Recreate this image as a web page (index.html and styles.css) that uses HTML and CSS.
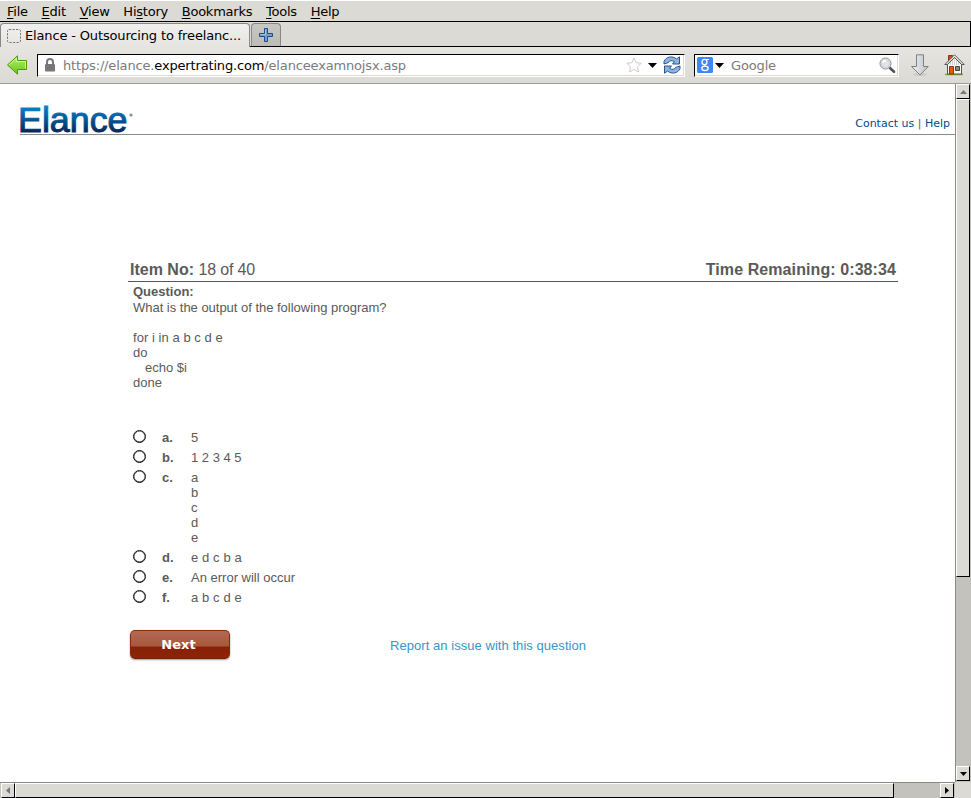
FILE: index.html
```
<!DOCTYPE html>
<html lang="en">
<head>
<meta charset="utf-8">
<title>Elance - Outsourcing to freelancers</title>
<link rel="stylesheet" href="styles.css">
</head>
<body>
<div class="window">
  <nav class="menubar">
    <span><u>F</u>ile</span><span><u>E</u>dit</span><span><u>V</u>iew</span><span>Hi<u>s</u>tory</span><span><u>B</u>ookmarks</span><span><u>T</u>ools</span><span><u>H</u>elp</span>
  </nav>
  <div class="tabs">
    <div class="tab"><svg width="14" height="14" viewBox="0 0 14 14"><rect x=".5" y=".5" width="13" height="13" rx="1.5" fill="none" stroke="#777" stroke-dasharray="2.2 1.3"/></svg><span>Elance - Outsourcing to freelanc...</span></div>
    <div class="newtab"><svg width="14" height="14" viewBox="0 0 14 14"><path d="M5.5.5h3v5h5v3h-5v5h-3v-5h-5v-3h5z" fill="#729fcf" stroke="#204a87"/><path d="M6.5 1.5v5h-5" fill="none" stroke="#a5c4e4"/></svg></div>
  </div>
  <div class="toolbar">
    <svg class="back" width="22" height="20" viewBox="0 0 22 20"><defs><linearGradient id="gr" x1="0" y1="0" x2="0" y2="1"><stop offset="0" stop-color="#b5ec70"/><stop offset=".5" stop-color="#8edb45"/><stop offset="1" stop-color="#65c41b"/></linearGradient></defs><path d="M1.500 10 11.500.8V5.500h9v9h-9v4.700z" fill="url(#gr)" stroke="#4e9a06" stroke-linejoin="round"/><path d="M3 10 10.500 3.200v3.300h9v7" fill="none" stroke="#d0f5a0"/></svg>
    <div class="field url">
      <svg width="12" height="14" viewBox="0 0 12 14"><rect x="1" y="6" width="10" height="7.500" rx="1" fill="#777"/><path d="M3 6V4a3 3 0 0 1 6 0v2" fill="none" stroke="#777" stroke-width="2"/></svg>
      <span class="address">https://elance.<b>expertrating.com</b>/elanceexamnojsx.asp</span>
      <svg class="star" width="16" height="16" viewBox="0 0 16 16"><path d="M8 1l2.100 4.700 5.100.6-3.700 3.500.9 5.200L8 12.500 3.600 15l.9-5.200L.8 6.300l5.100-.6z" fill="#fff" stroke="#ccc" stroke-linejoin="round"/></svg>
      <svg class="drop" width="9" height="5" viewBox="0 0 9 5"><path d="M0 0h9L4.500 5z"/></svg>
      <svg class="reload" width="18" height="18" viewBox="0 0 18 18"><g fill="#8db4dc" stroke="#2a5591" stroke-linejoin="round"><path d="M1 8V5.500C3 .5 9.500-.5 13.500 3L16.500.8V8H9.500l2-2.300C9 4 6 4.500 5.500 6.500L1 8z"/><path d="M17 10v2.500c-2 5-8.500 6-12.500 2.500l-3 2.200V10h7l-2 2.300c2.500 1.700 5.500 1.200 6-.8z"/></g></svg>
    </div>
    <div class="field search">
      <svg class="engine" width="16" height="16" viewBox="0 0 16 16"><rect width="16" height="16" rx="1.500" fill="#4285f4"/><g fill="none" stroke="#fff"><ellipse cx="7.500" cy="5" rx="2.500" ry="2.700" stroke-width="1.300"/><path d="M9 2.500h3" /><path d="M8.500 7.500q-2 1 .5 2"/><ellipse cx="8" cy="11.300" rx="3.200" ry="2.200" stroke-width="1.300"/></g></svg>
      <svg class="drop" width="9" height="5" viewBox="0 0 9 5"><path d="M0 0h9L4.500 5z"/></svg>
      <span>Google</span>
      <svg class="glass" width="17" height="17" viewBox="0 0 17 17"><path d="M11 11l4 3.800" stroke="#555" stroke-width="2.600" stroke-linecap="round"/><circle cx="6.500" cy="6.500" r="5.500" fill="#f4f4f4" stroke="#888"/><circle cx="6.500" cy="6.500" r="4" fill="#dce6ec" stroke="#c5cdd0"/><path d="M4 6q0-2.500 3-2.500" stroke="#fff" stroke-width="1.500" fill="none"/></svg>
    </div>
    <svg class="download" width="20" height="23" viewBox="0 0 20 23"><defs><linearGradient id="dg"><stop offset="0" stop-color="#f2f2f2"/><stop offset=".5" stop-color="#d4dadd"/><stop offset="1" stop-color="#c4c9c9"/></linearGradient></defs><ellipse cx="10" cy="20.500" rx="7" ry="1.600" fill="#ccccc7"/><path d="M6.500.8h7v11.700h4.700L10 21 1.500 12.500h5z" fill="url(#dg)" stroke="#7d807e" stroke-linejoin="round"/></svg>
    <svg class="home" width="21" height="22" viewBox="0 0 21 22"><path d="M1 20.500h18" stroke="#73b216" stroke-width="1.500"/><path d="M4.500 1.500h4v6h-4z" fill="#d9490b" stroke="#8f3512"/><path d="M3.500 10.500 10.500 3l7 7.500v9.500h-14z" fill="#f6f6f4" stroke="#555753"/><path d="M8.500 6v5m2-7v7m2-5v5m2-3v3M6.500 8v3" stroke="#d0d2cd"/><path d="M.8 10.500 10.500.8l9.700 9.700h-2.500L10.500 3.500l-7.200 7z" fill="#eeeeec" stroke="#444" stroke-width=".9"/><path d="M5.500 12.500h4v7.500h-4z" fill="#e4580f" stroke="#8f3512"/><path d="M11.500 12.500h4v4h-4z" fill="#888a85" stroke="#444"/></svg>
  </div>
  <div class="viewport">
    <main class="page">
      <header class="site">
        <svg class="logo" width="114" height="29" viewBox="0 0 114 29"><defs><linearGradient id="lg" gradientUnits="userSpaceOnUse" x1="0" y1="1" x2="0" y2="27"><stop offset="0" stop-color="#0880c6"/><stop offset=".5" stop-color="#075494"/><stop offset="1" stop-color="#062456"/></linearGradient></defs><text x="-2" y="25.500" textLength="109.500" lengthAdjust="spacingAndGlyphs" font-family="Liberation Sans, sans-serif" font-size="35" fill="url(#lg)" stroke="url(#lg)" stroke-width="1">Elance</text><circle cx="111" cy="9" r="1.600" fill="#7894ac"/></svg>
        <div class="links"><a>Contact us</a> | <a>Help</a></div>
      </header>
      <section class="exam">
        <div class="status"><div class="item"><b>Item No:</b> <span>18 of 40</span></div><b class="time">Time Remaining: 0:38:34</b></div>
        <div class="question"><b>Question:</b><p class="ask">What is the output of the following program?</p><pre><span class="for">for i in a b c d e</span>
do
<span class="echo">echo $i</span>
done</pre></div>
        <div class="answers">
          <label><i></i><b>a.</b><span>5</span></label>
          <label><i></i><b>b.</b><span class="nums">1 2 3 4 5</span></label>
          <label><i></i><b>c.</b><span>a<br>b<br>c<br>d<br>e</span></label>
          <label><i></i><b>d.</b><span class="letters">e d c b a</span></label>
          <label><i></i><b>e.</b><span class="error">An error will occur</span></label>
          <label><i></i><b>f.</b><span class="letters">a b c d e</span></label>
        </div>
        <div class="actions"><button>Next</button><a>Report an issue with this question</a></div>
      </section>
    </main>
    <div class="vbar"><div class="knob up"><svg width="7" height="4" viewBox="0 0 7 4"><path d="M0 4h7L3.500 0z" fill="#777"/></svg></div><div class="thumb"></div><div class="knob down"><svg width="7" height="4" viewBox="0 0 7 4"><path d="M0 0h7L3.500 4z"/></svg></div></div>
    <div class="hbar"><div class="knob"><svg width="4" height="7" viewBox="0 0 4 7"><path d="M4 0v7L0 3.500z" fill="#777"/></svg></div><div class="thumb"></div><div class="knob right"><svg width="4" height="7" viewBox="0 0 4 7"><path d="M0 0v7l4-3.500z"/></svg></div></div>
    <div class="corner"></div>
  </div>
</div>
</body>
</html>
```
FILE: styles.css
```
* { box-sizing: border-box; }
body { margin: 0; overflow: hidden; background: #dcdad5; font-family: "DejaVu Sans", sans-serif; font-size: 13px; color: #000; }
svg { display: block; flex: none; }
.window { width: 971px; height: 798px; display: flex; flex-direction: column; }

.menubar { height: 22px; padding: 0 7px; display: flex; gap: 13.8px; line-height: 21px; letter-spacing: -.24px; border-top: 1px solid #fff; border-bottom: 1px solid #000; }
.menubar u { text-underline-offset: 2px; }

.tabs { height: 25px; display: flex; align-items: flex-end; gap: 1px; padding-top: 1px; border-bottom: 1px solid #000; border-right: 1px solid #000; }
.tab { width: 250px; height: 24px; margin-bottom: -1px; padding: 0 6px; display: flex; align-items: center; gap: 4px; white-space: nowrap; letter-spacing: -.15px; background: linear-gradient(#f1f0ee, #e5e4e0); border: 1px solid #888; border-bottom: 0; border-radius: 4px 4px 0 0; }
.newtab { width: 30px; height: 23px; display: flex; align-items: center; justify-content: center; background: linear-gradient(#c9c7c2, #bdbbb6); border: 1px solid #888; border-bottom: 0; border-radius: 4px 4px 0 0; }

.toolbar { height: 37px; display: flex; align-items: center; padding: 0 6px; background: linear-gradient(#e5e4e0, #dcdad5); border-bottom: 1px solid #9d9c98; }
.back { margin-right: 9px; }
.field { height: 23px; display: flex; align-items: center; background: #fff; border: 1px solid #000; border-right-color: #fff; border-bottom-color: #fff; box-shadow: inset -1px -1px #dcdad5; color: #7b7b7b; }
.url { width: 648px; padding-left: 6px; }
.address { margin-left: 7px; white-space: nowrap; letter-spacing: -.16px; }
.address b { font-weight: normal; color: #000; }
.star { margin-left: auto; }
.url .drop { margin: 0 6px 0 6px; }
.reload { margin-right: 3px; }
.search { width: 205px; margin-left: 9px; padding: 0 2px; }
.search .drop { margin: 0 7px 0 2px; }
.search span { letter-spacing: -.15px; }
.glass { margin-left: auto; }
.download { margin-left: 11px; }
.home { margin-left: 14px; }

.viewport { flex: 1; display: grid; grid-template: 698px 16px / 955px 16px; }
.page { background: #fff; overflow: hidden; font-family: "Liberation Sans", sans-serif; color: #5a5a5a; }
.site { height: 51px; margin-left: 20px; padding: 22px 5px 0 0; display: flex; justify-content: space-between; border-bottom: 1px solid #8b8b8b; }
.logo { overflow: visible; }
.links { margin-top: 10px; font: 11px/16px "DejaVu Sans", sans-serif; }
.links a { color: #064a87; }
.exam { width: 770px; margin: 125px 0 0 128px; }
.status { height: 22px; padding: 0 2px; display: flex; justify-content: space-between; font-size: 16px; line-height: 19px; border-bottom: 1px solid #54575a; }
.item span { letter-spacing: -.15px; }
.time { letter-spacing: .09px; }
.question { height: 145px; padding: 2px 5px; line-height: 15px; }
.question p { margin: 1px 0 15px; letter-spacing: -.02px; }
.question pre { margin: 0; font: inherit; }
.for { letter-spacing: .05px; }
.echo { margin-left: 12px; }
.letters { letter-spacing: .1px; }
.answers label { display: grid; grid-template-columns: 29px 29px 1fr; padding: 3px 0 2px 5px; line-height: 15px; }
.answers i { width: 13px; height: 13px; border: 1px solid #111; border-radius: 50%; box-shadow: inset 0 0 0 .4px #333; }
.actions { display: flex; align-items: center; margin: 23px 0 0 2px; }
.actions button { width: 100px; height: 29px; padding: 0 3px 1px 0; border: 1px solid #85290c; border-bottom-color: #6f2209; border-radius: 5px; background: linear-gradient(#b36a52, #a8573d 57%, #862005 58%, #8d2406); box-shadow: 0 1px 2px #999; color: #fff; font: bold 13px "DejaVu Sans", sans-serif; }
.actions a { margin: 2px 0 0 160px; color: #3a94c5; letter-spacing: .05px; }

.vbar { display: flex; flex-direction: column; background: #c4c2bd; border-left: 1px solid #8b8984; padding-right: 1px; }
.hbar { display: flex; background: #c4c2bd; border-top: 1px solid #8b8984; padding: 0 1px; }
.knob, .thumb { background: #dcdad5; border: 1px solid #fff; border-right-color: #000; border-bottom-color: #000; }
.knob { width: 14px; height: 15px; display: flex; align-items: center; justify-content: center; }
.vbar .thumb { height: 478px; }
.down { margin-top: auto; margin-bottom: 1px; }
.hbar .thumb { width: 879px; }
.right { margin-left: auto; }
```
